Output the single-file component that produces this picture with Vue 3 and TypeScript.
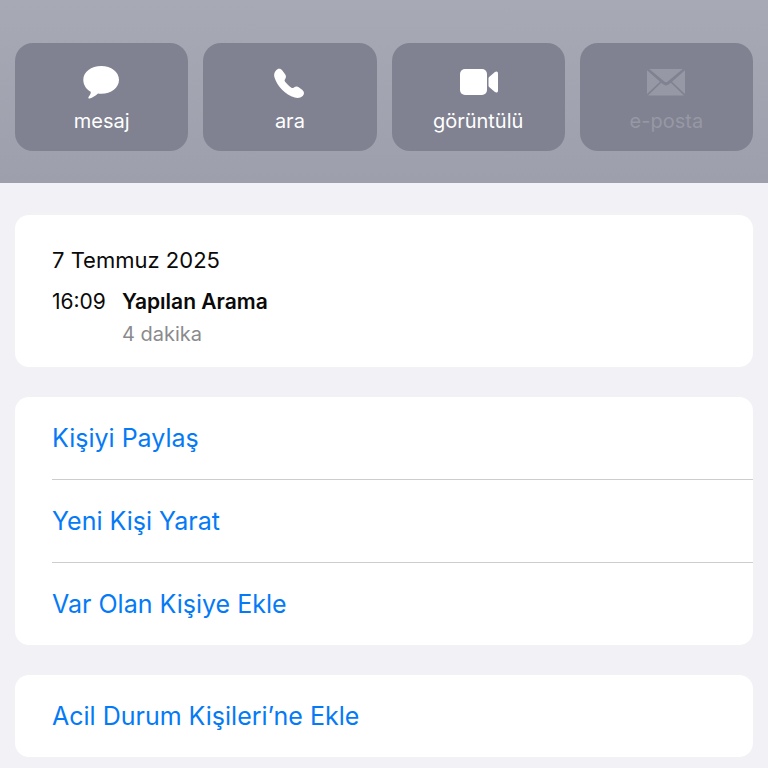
<script setup lang="ts">
type IconName = 'message' | 'phone' | 'video' | 'mail'

interface QuickAction {
  icon: IconName
  label: string
  disabled?: boolean
}

interface CallRecord {
  time: string
  kind: string
  duration: string
}

const quickActions: QuickAction[] = [
  { icon: 'message', label: 'mesaj' },
  { icon: 'phone', label: 'ara' },
  { icon: 'video', label: 'görüntülü' },
  { icon: 'mail', label: 'e-posta', disabled: true },
]

const callDate = '7 Temmuz 2025'
const calls: CallRecord[] = [{ time: '16:09', kind: 'Yapılan Arama', duration: '4 dakika' }]

const actionGroups: string[][] = [
  ['Kişiyi Paylaş', 'Yeni Kişi Yarat', 'Var Olan Kişiye Ekle'],
  ['Acil Durum Kişileri’ne Ekle'],
]
</script>

<template>
  <main class="page">
    <header class="hero">
      <button
        v-for="action in quickActions"
        :key="action.icon"
        type="button"
        class="tile"
        :disabled="action.disabled"
      >
        <svg class="tile-icon" viewBox="0 0 40 36" aria-hidden="true">
          <path
            v-if="action.icon === 'message'"
            d="M19.2 2C29.2 2 37 7.900 37 15.800C37 23.900 29.200 29.800 19.300 29.800C18 29.800 17 29.800 16 29.600C13.400 31.900 10.500 33.800 7.700 34.500C6.500 34.800 5.900 33.700 6.700 32.700C8.300 30.800 9 29.300 8.700 27.800C4.100 25.200 1.300 20.900 1.300 15.800C1.300 7.900 9.200 2 19.200 2Z"
          />
          <path
            v-else-if="action.icon === 'phone'"
            d="M6 6.400C7.800 4.300 10.700 4.300 12.300 6.400L15.100 10.300C16.300 12 16.200 13.600 15.200 15C14.400 16.100 14.400 16.700 15.100 17.800C16.800 20 18.800 22 21.100 23.500C22.200 24.300 22.900 24.200 23.900 23.500C25.400 22.400 27.200 22.200 28.700 23.200L32.400 25.900C34.500 27.500 34.500 30.200 32.700 32C30.600 34 27.600 34.400 24.700 33.500C15.300 30.500 7.300 22.600 4.500 13.500C3.700 10.900 4.200 8.400 6 6.400Z"
          />
          <template v-else-if="action.icon === 'video'">
            <rect x="2" y="5" width="27" height="26" rx="5" />
            <path
              d="M30.500 14.500Q30.500 13.700 31.100 13.100L36.600 8.200C38.400 6.700 40 7.400 40 9.500V26.500C40 28.600 38.400 29.300 36.600 27.800L31.100 22.900Q30.500 22.300 30.500 21.500Z"
            />
          </template>
          <template v-else>
            <path d="M3.200 5H36.800L22 17.300C20.600 18.500 19.400 18.500 18 17.300Z" />
            <path d="M1 6.200L14 17.700L1 30Z" />
            <path d="M39 6.200L26 17.700L39 30Z" />
            <path d="M15.200 18.800L16.800 20.100C18.900 21.800 21.100 21.800 23.200 20.100L24.800 18.800L38 31.500H2Z" />
          </template>
        </svg>
        <span>{{ action.label }}</span>
      </button>
    </header>

    <div class="content">
      <section class="card history">
        <h2 class="date">{{ callDate }}</h2>
        <div v-for="call in calls" :key="call.time" class="call">
          <time class="time">{{ call.time }}</time>
          <div>
            <p class="kind">{{ call.kind }}</p>
            <p class="duration">{{ call.duration }}</p>
          </div>
        </div>
      </section>

      <ul v-for="(group, index) in actionGroups" :key="index" class="card list">
        <li v-for="label in group" :key="label" class="row">
          <button type="button" class="link">{{ label }}</button>
        </li>
      </ul>
    </div>
  </main>
</template>

<style>
body {
  margin: 0;
  background: #f1f1f6;
}
</style>

<style scoped>
.page {
  font-family: Inter, "Liberation Sans", sans-serif;
  color: #0a0a0a;
}

.hero {
  display: grid;
  grid-template-columns: repeat(4, 1fr);
  gap: 15px;
  padding: 43px 15px 32px;
  background: linear-gradient(#a7aab5, #9d9fac);
}

.tile {
  display: flex;
  flex-direction: column;
  align-items: center;
  gap: 8px;
  padding: 21px 0 17px;
  border: 0;
  border-radius: 18px;
  background: #808291;
  color: #ffffff;
  font-family: inherit;
  font-size: 20px;
  line-height: 26px;
}

.tile:disabled {
  color: #9698a5;
}

.tile-icon {
  width: 40px;
  height: 36px;
  fill: currentColor;
}

.content {
  display: flex;
  flex-direction: column;
  gap: 30px;
  padding: 32px 15px 11px;
}

.card {
  margin: 0;
  border-radius: 14px;
  background: #ffffff;
}

.history {
  padding: 29px 37px 16px;
}

.date {
  margin: 0 0 9px;
  font-size: 22px;
  font-weight: 400;
  line-height: 32px;
}

.call {
  display: flex;
  gap: 16px;
}

.time,
.kind {
  font-size: 21px;
  line-height: 33px;
}

.kind {
  margin: 0;
  font-weight: 600;
}

.duration {
  margin: 0;
  color: #8a8a8d;
  font-size: 20px;
  line-height: 33px;
}

.list {
  padding: 0 0 0 37px;
  list-style: none;
}

.row + .row {
  border-top: 1px solid #cdcdd0;
}

.link {
  display: block;
  width: 100%;
  padding: 25px 0;
  border: 0;
  background: none;
  color: #057af6;
  font-family: inherit;
  font-size: 25px;
  line-height: 32px;
  text-align: left;
}
</style>
